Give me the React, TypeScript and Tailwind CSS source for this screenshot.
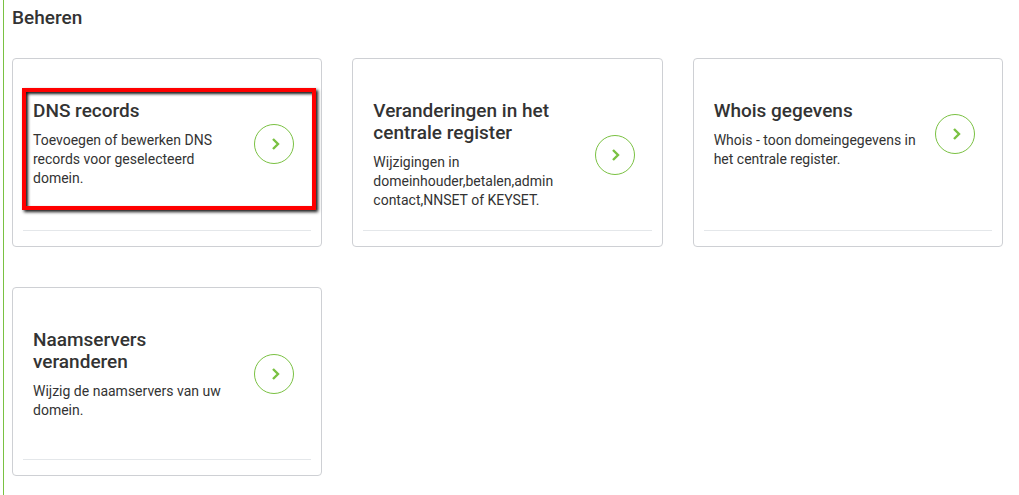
type ManageItem = {
  title: string;
  description: string;
  href: string;
  highlighted?: boolean;
};

const items: ManageItem[] = [
  {
    title: "DNS records",
    description: "Toevoegen of bewerken DNS records voor geselecteerd domein.",
    href: "#dns-records",
    highlighted: true,
  },
  {
    title: "Veranderingen in het centrale register",
    description: "Wijzigingen in domeinhouder,betalen,admin contact,NNSET of KEYSET.",
    href: "#centrale-register",
  },
  {
    title: "Whois gegevens",
    description: "Whois - toon domeingegevens in het centrale register.",
    href: "#whois",
  },
  {
    title: "Naamservers veranderen",
    description: "Wijzig de naamservers van uw domein.",
    href: "#naamservers",
  },
];

export default function App() {
  return (
    <main className="ml-[3px] min-h-screen border-l border-[#7ac142] bg-white pt-[7px] pr-4 pl-2 font-['Roboto',sans-serif] text-[#333333]">
      <h2 className="mb-[29px] text-[19px] leading-[22px] font-medium">Beheren</h2>
      <div className="grid grid-cols-3 gap-x-[30px] gap-y-10">
        {items.map(item => (
          <ManageCard key={item.title} item={item} />
        ))}
      </div>
    </main>
  );
}

function ManageCard({ item }: { item: ManageItem }) {
  return (
    <section className="relative flex flex-col rounded border border-[#ced0d4] px-2.5 pt-10 pb-[15px]">
      <div className="flex min-h-[132px] items-start border-b border-[#e4e7ea] pb-5">
        <div className="flex w-full items-center gap-4 pr-[17px] pl-2.5">
          <div className="min-w-0 flex-1">
            <h3 className="mb-[9px] pt-px text-[19px] leading-[22px] font-medium">{item.title}</h3>
            <p className="text-sm leading-[19px]">{item.description}</p>
          </div>
          <a
            href={item.href}
            aria-label={item.title}
            className="flex size-10 shrink-0 items-center justify-center rounded-full border border-[#7ac142] text-[#7ac142]"
          >
            <ChevronIcon />
          </a>
        </div>
      </div>
      {item.highlighted && <HighlightFrame />}
    </section>
  );
}

function ChevronIcon() {
  return (
    <svg viewBox="0 0 12 14" className="ml-[3px] h-3.5 w-3" fill="none" stroke="currentColor" strokeWidth="2.4" aria-hidden="true">
      <path d="M3 2 8 7 3 12" />
    </svg>
  );
}

function HighlightFrame() {
  return (
    <div className="pointer-events-none absolute top-[29px] right-[5px] left-[9px] h-[122px] border-4 border-[#ff0000] shadow-[2px_2px_3px_0px_rgba(0,0,0,0.9),inset_2px_2px_3px_0px_rgba(0,0,0,0.9)]" />
  );
}
